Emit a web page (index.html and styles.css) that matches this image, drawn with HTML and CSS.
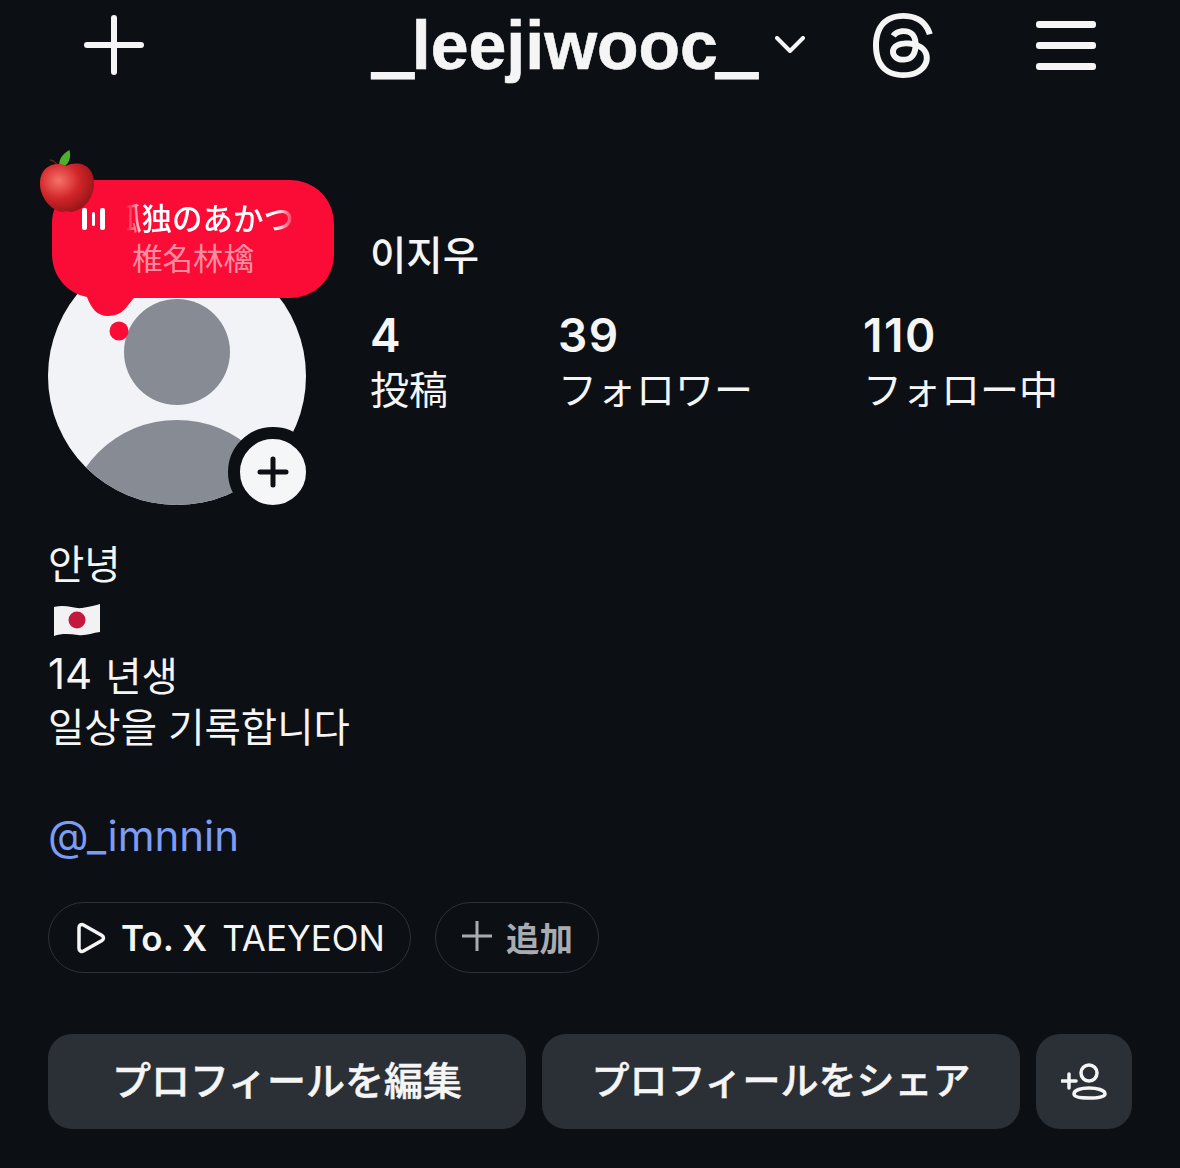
FILE: index.html
```html
<!DOCTYPE html>
<html lang="ja">
<head>
    <meta charset="UTF-8">
    <meta name="viewport" content="width=device-width, initial-scale=1.0">
    <title>_leejiwooc_</title>
    <link rel="stylesheet" href="styles.css">
</head>
<body>
    <div class="container">
        <header class="topbar">
            <svg class="icon-plus" viewBox="0 0 60 60"><path d="M30 3v54M3 30h54"/></svg>
            <div class="username"><span class="under">_</span>leejiwooc<span class="under">_</span></div>
            <svg class="icon-chevron" viewBox="0 0 30 18"><path d="M2 2l13 13L28 2"/></svg>
            <svg class="icon-threads" viewBox="13 0 166 192" preserveAspectRatio="none"><path d="M141.537 88.9883C140.71 88.5919 139.87 88.2104 139.019 87.8451C137.537 60.5382 122.616 44.905 97.5619 44.745C97.4484 44.7443 97.3355 44.7443 97.222 44.7443C82.2364 44.7443 69.7731 51.1409 62.102 62.7807L75.881 72.2328C81.6116 63.5383 90.6052 61.6848 97.2286 61.6848C97.3051 61.6848 97.3819 61.6848 97.4576 61.6855C105.707 61.7381 111.932 64.1366 115.961 68.814C118.893 72.2193 120.854 76.925 121.825 82.8638C114.511 81.6207 106.601 81.2385 98.145 81.7233C74.3247 83.0954 59.0111 96.9879 60.0396 116.292C60.5615 126.084 65.4397 134.508 73.775 140.011C80.8224 144.663 89.899 146.938 99.3323 146.423C111.79 145.74 121.563 140.987 128.381 132.296C133.559 125.696 136.834 117.143 138.28 106.366C144.217 109.949 148.617 114.664 151.047 120.332C155.179 129.967 155.42 145.8 142.501 158.708C131.182 170.016 117.576 174.908 97.0135 175.059C74.2042 174.89 56.9538 167.575 45.7381 153.317C35.2355 139.966 29.8077 120.682 29.6052 96C29.8077 71.3178 35.2355 52.0336 45.7381 38.6827C56.9538 24.4249 74.2039 17.11 97.0132 16.9405C119.988 17.1113 137.539 24.4614 149.184 38.788C154.894 45.8136 159.199 54.6488 162.037 64.9503L178.184 60.6422C174.744 47.9622 169.331 37.0357 161.965 27.974C147.036 9.60668 125.202 0.195148 97.0695 0H96.9569C68.8816 0.19447 47.2921 9.6418 32.7883 28.0793C19.8819 44.4864 13.2244 67.3157 13.0007 95.9325L13 96L13.0007 96.0675C13.2244 124.684 19.8819 147.514 32.7883 163.921C47.2921 182.358 68.8816 191.806 96.9569 192H97.0695C122.03 191.827 139.624 185.292 154.118 170.811C173.081 151.866 172.51 128.119 166.26 113.541C161.776 103.087 153.227 94.5962 141.537 88.9883ZM98.4405 129.507C88.0005 130.095 77.1544 125.409 76.6196 115.372C76.2232 107.93 81.9158 99.626 99.0812 98.6368C101.047 98.5234 102.976 98.468 104.871 98.468C111.106 98.468 116.939 99.0737 122.242 100.233C120.264 124.935 108.662 128.946 98.4405 129.507Z"/></svg>
            <div class="icon-menu"><span></span><span></span><span></span></div>
        </header>

        <section class="profile">
            <div class="avatar">
                <svg class="avatar-img" viewBox="0 0 258 258">
                    <circle cx="129" cy="129" r="129" fill="#f1f3f6"/>
                    <circle cx="129" cy="105" r="53" fill="#868b94"/>
                    <clipPath id="avatar-clip"><circle cx="129" cy="129" r="129"/></clipPath>
                    <ellipse cx="129" cy="283" rx="111" ry="110" fill="#868b94" clip-path="url(#avatar-clip)"/>
                </svg>
                <div class="add-story">
                    <svg viewBox="0 0 32 32"><path d="M16 3v26M3 16h26"/></svg>
                </div>
                <div class="note">
                    <svg class="note-shape" viewBox="0 0 282 162">
                        <path d="M45 0H237C263 0 282 19 282 44V74C282 99 263 118 237 118H82C76 124 72 136 56 136C45 136 39 128 35 117C15 113 0 96 0 74V44C0 19 19 0 45 0Z"/>
                        <circle cx="67" cy="151" r="9.5"/>
                    </svg>
                    <svg class="note-apple" viewBox="0 0 58 64">
                        <defs>
                            <radialGradient id="apple-red" cx="35%" cy="35%" r="75%">
                                <stop offset="0" stop-color="#f5736a"/>
                                <stop offset=".5" stop-color="#d2262a"/>
                                <stop offset="1" stop-color="#8c1216"/>
                            </radialGradient>
                        </defs>
                        <path d="M11 10c4 1 7 3 9 7" fill="none" stroke="#5e2a1a" stroke-width="1.5"/>
                        <path d="M21 18C19 10 24 4 31 0c2 7 0 14-7 18Z" fill="#4fae2c"/>
                        <path d="M28 16c10-5 28-3 28 18 0 15-11 28-24 29-3-1-5-1-8 0C12 62 0 47 1 32 2 16 17 11 28 16Z" fill="url(#apple-red)"/>
                    </svg>
                    <div class="note-bars"><span></span><span></span><span></span></div>
                    <div class="note-title"><span>孤独のあかつき</span></div>
                    <div class="note-artist">椎名林檎</div>
                </div>
            </div>
            <div class="profile-info">
                <div class="display-name">이지우</div>
                <div class="stats">
                    <div class="stat"><div class="stat-num">4</div><div class="stat-label">投稿</div></div>
                    <div class="stat"><div class="stat-num">39</div><div class="stat-label">フォロワー</div></div>
                    <div class="stat"><div class="stat-num">110</div><div class="stat-label">フォロー中</div></div>
                </div>
            </div>
        </section>

        <section class="bio">
            <div class="bio-line bio-kr">안녕</div>
            <div class="bio-line">
                <svg class="flag" viewBox="0 0 50 36">
                    <path d="M2 5C14 2 22 7 30 6C38 5 44 3 48 2V30C40 31 34 34 26 33C18 32 10 31 2 34Z" fill="#f3f2f2"/>
                    <circle cx="25" cy="18" r="8.5" fill="#c4193f"/>
                </svg>
            </div>
            <div class="bio-line"><span class="latin">14</span> 년생</div>
            <div class="bio-line bio-kr">일상을 기록합니다</div>
            <div class="bio-line">&nbsp;</div>
            <div class="bio-line bio-link"><span class="latin">@_imnnin</span></div>
        </section>

        <section class="chips">
            <div class="chip chip-music">
                <svg class="icon-play" viewBox="0 0 30 32"><path d="M3 5.500C3 3 5.500 2 7.500 3L26 13.500C28 14.800 28 17.200 26 18.500L7.500 29C5.500 30 3 29 3 26.500Z"/></svg>
                <span class="chip-song">To. X</span>
                <span class="chip-artist">TAEYEON</span>
            </div>
            <div class="chip chip-add">
                <svg class="icon-chip-plus" viewBox="0 0 30 30"><path d="M15 0v30M0 15h30"/></svg>
                <span>追加</span>
            </div>
        </section>

        <section class="actions">
            <button class="btn btn-edit">プロフィールを編集</button>
            <button class="btn">プロフィールをシェア</button>
            <button class="btn btn-icon">
                <svg viewBox="0 0 46 38"><path d="M1 18h14M8 11v14"/><circle cx="28" cy="10" r="8"/><path d="M13 31c0-4 7-6 15-6s16 2 16 6c0 3-8 4-16 4s-15-1-15-4Z"/></svg>
            </button>
        </section>
    </div>
</body>
</html>
```

FILE: styles.css
```css
body {
    margin: 0;
    background-color: #0c1014;
    color: #f5f5f5;
    font-family: 'Inter', 'Noto Sans CJK KR', sans-serif;
}
.container {
    width: 1180px;
    height: 1168px;
    overflow: hidden;
    padding: 0 48px;
    box-sizing: border-box;
}

/* top bar */
.topbar {
    display: flex;
    align-items: center;
    height: 90px;
}
.icon-plus {
    width: 60px;
    height: 60px;
    margin-left: 36px;
    fill: none;
    stroke: #f5f5f5;
    stroke-width: 6;
    stroke-linecap: round;
}
.username {
    margin-left: 230px;
    width: 382px;
    font-family: 'Liberation Sans', sans-serif;
    font-weight: bold;
    font-size: 68px;
    line-height: 90px;
    white-space: nowrap;
    -webkit-text-stroke: 0.6px #f5f5f5;
}
.under {
    -webkit-text-stroke: 5px #f5f5f5;
}
.icon-chevron {
    width: 30px;
    height: 18px;
    margin-left: 19px;
    fill: none;
    stroke: #f5f5f5;
    stroke-width: 4;
    stroke-linecap: round;
    stroke-linejoin: round;
}
.icon-threads {
    width: 60px;
    height: 65px;
    margin-left: 68px;
    fill: #f5f5f5;
}
.icon-menu {
    margin-left: 103px;
    width: 60px;
    display: flex;
    flex-direction: column;
    gap: 14px;
}
.icon-menu span {
    height: 7px;
    border-radius: 3px;
    background-color: #f5f5f5;
}

/* avatar + stats */
.profile {
    display: flex;
    gap: 64px;
    margin-top: 157px;
}
.avatar {
    position: relative;
    width: 258px;
    height: 258px;
    flex-shrink: 0;
}
.avatar-img {
    display: block;
    width: 258px;
    height: 258px;
}
.add-story {
    position: absolute;
    left: 180px;
    top: 180px;
    width: 66px;
    height: 66px;
    border: 12px solid #0c1014;
    border-radius: 50%;
    background-color: #f5f6f7;
    display: flex;
    align-items: center;
    justify-content: center;
}
.add-story svg {
    width: 32px;
    height: 32px;
    fill: none;
    stroke: #0c1014;
    stroke-width: 5;
    stroke-linecap: round;
}
.note {
    position: absolute;
    left: 4px;
    top: -67px;
    width: 282px;
    height: 162px;
}
.note-shape {
    position: absolute;
    left: 0;
    top: 0;
    width: 282px;
    height: 162px;
    fill: #fa0c36;
}
.note-apple {
    position: absolute;
    left: -13px;
    top: -30px;
    width: 57px;
    height: 63px;
}
.note-bars {
    position: absolute;
    left: 30px;
    top: 28px;
    display: flex;
    align-items: flex-start;
    gap: 5px;
    height: 22px;
}
.note-bars span {
    width: 5px;
    height: 22px;
    border-radius: 2px;
    background-color: #fff;
}
.note-bars span:nth-child(2) {
    width: 3px;
    height: 14px;
    margin-top: 4px;
}
.note-title {
    position: absolute;
    left: 74px;
    top: 16px;
    width: 170px;
    height: 44px;
    overflow: hidden;
    font-family: 'Noto Sans CJK JP', sans-serif;
    font-size: 30.500px;
    font-weight: 500;
    line-height: 42px;
    color: #fff;
    white-space: nowrap;
    -webkit-mask-image: linear-gradient(to right, transparent 0, #000 18px, #000 150px, transparent 170px);
    mask-image: linear-gradient(to right, transparent 0, #000 18px, #000 150px, transparent 170px);
}
.note-title span {
    margin-left: -15px;
}
.note-artist {
    position: absolute;
    left: 80px;
    top: 56px;
    font-family: 'Noto Sans CJK JP', sans-serif;
    font-size: 30.500px;
    line-height: 42px;
    color: rgba(255, 255, 255, 0.55);
    white-space: nowrap;
}
.display-name {
    margin-top: -18px;
    font-family: 'Noto Sans CJK KR', sans-serif;
    font-size: 39.500px;
    font-weight: 500;
    line-height: 48px;
}
.stats {
    display: flex;
    gap: 110px;
    margin-top: 32px;
}
.stat-num {
    font-size: 46px;
    font-weight: 600;
    line-height: 52px;
    letter-spacing: 1.500px;
}
.stat-label {
    font-family: 'Noto Sans CJK JP', sans-serif;
    font-size: 39px;
    line-height: 52px;
    white-space: nowrap;
}

/* bio */
.bio {
    margin-top: 33px;
    font-family: 'Inter', 'Noto Sans CJK KR', sans-serif;
    font-size: 39.500px;
}
.bio-line {
    display: flex;
    align-items: center;
    gap: 0.33em;
    height: 54.400px;
    box-sizing: border-box;
    white-space: nowrap;
}
.bio-kr {
    padding-bottom: 7px;
}
.latin {
    font-size: 42px;
}
.bio-link {
    padding-bottom: 4px;
    color: #7d9cf5;
}
.flag {
    width: 50px;
    height: 36px;
    margin-left: 4px;
}

/* music chip */
.chips {
    display: flex;
    gap: 24px;
    margin-top: 38px;
}
.chip {
    display: flex;
    align-items: center;
    height: 71px;
    box-sizing: border-box;
    border: 1.500px solid #2e3237;
    border-radius: 36px;
    font-size: 35px;
    white-space: nowrap;
}
.chip-music {
    width: 363px;
    padding-left: 27px;
}
.icon-play {
    width: 30px;
    height: 32px;
    fill: none;
    stroke: #f5f5f5;
    stroke-width: 3.500;
}
.chip-song {
    margin-left: 15px;
    font-weight: 600;
}
.chip-artist {
    margin-left: 15px;
    font-size: 35px;
}
.chip-add {
    width: 164px;
    padding-left: 26px;
    padding-bottom: 3px;
    color: #a8abb0;
    font-family: 'Noto Sans CJK JP', sans-serif;
    font-weight: 700;
    font-size: 33.500px;
}
.icon-chip-plus {
    width: 30px;
    height: 30px;
    margin-right: 14px;
    fill: none;
    stroke: #a8abb0;
    stroke-width: 3;
}

/* buttons */
.actions {
    display: flex;
    gap: 16px;
    margin-top: 61px;
}
.btn {
    width: 478px;
    height: 95px;
    padding: 0 0 8px;
    border: none;
    border-radius: 24px;
    background-color: #2b3036;
    color: #f5f5f5;
    font-family: 'Noto Sans CJK JP', sans-serif;
    font-size: 38px;
    font-weight: 500;
    white-space: nowrap;
    -webkit-text-stroke: 0.5px #f5f5f5;
}
.btn-edit {
    font-size: 39px;
}
.btn-icon {
    width: 96px;
    padding: 0;
    display: flex;
    align-items: center;
    justify-content: center;
}
.btn-icon svg {
    width: 46px;
    height: 38px;
    fill: none;
    stroke: #f5f5f5;
    stroke-width: 3.500;
    stroke-linecap: round;
}
```
